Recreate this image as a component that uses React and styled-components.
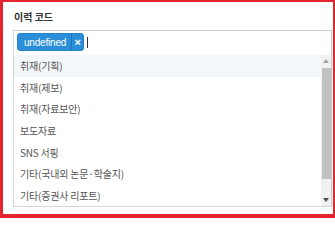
import React from 'react';
import styled, { createGlobalStyle } from 'styled-components';

const GlobalStyle = createGlobalStyle`
  html, body {
    margin: 0;
    padding: 0;
    background: #fff;
  }
  body {
    font-family: 'Liberation Sans', 'Noto Sans CJK KR', sans-serif;
  }
`;

const codes = [
  '취재(기획)',
  '취재(제보)',
  '취재(자료보안)',
  '보도자료',
  'SNS 서핑',
  '기타(국내외 논문·학술지)',
  '기타(증권사 리포트)'
];

export default function App() {
  return (
    <Frame>
      <GlobalStyle />
      <Label>이력 코드</Label>
      <SelectBox>
        <Selection>
          <Tag>
            <TagText>undefined</TagText>
            <TagRemove>×</TagRemove>
          </Tag>
          <Caret />
        </Selection>
        <Dropdown>
          <Options>
            {codes.map((code, i) => (
              <Option key={code} active={i === 0}>
                {code}
              </Option>
            ))}
          </Options>
          <ScrollBar>
            <ScrollArrow>
              <svg width="6" height="4" viewBox="0 0 6 4">
                <path d="M0 4 L3 0 L6 4 Z" fill="#a3a3a3" />
              </svg>
            </ScrollArrow>
            <ScrollTrack>
              <Thumb />
            </ScrollTrack>
            <ScrollArrow>
              <svg width="6" height="4" viewBox="0 0 6 4">
                <path d="M0 0 L3 4 L6 0 Z" fill="#505050" />
              </svg>
            </ScrollArrow>
          </ScrollBar>
        </Dropdown>
      </SelectBox>
    </Frame>
  );
}

const Frame = styled.div`
  box-sizing: border-box;
  width: 335px;
  height: 218px;
  border-style: solid;
  border-color: #e5262c;
  border-width: 2px 2px 4px 3px;
  padding: 8px 1px 0 10px;
  background: #fff;
`;

const Label = styled.div`
  font-family: 'Noto Sans CJK KR', sans-serif;
  font-weight: bold;
  font-size: 10px;
  line-height: 14px;
  color: #333;
  margin: 0 0 6px 1px;
`;

const SelectBox = styled.div`
  box-sizing: border-box;
  width: 319px;
  border: 1px solid #d2d6de;
  border-right-color: #c8c8c8;
  border-top-color: #cfcfcf;
`;

const Selection = styled.div`
  box-sizing: border-box;
  height: 24px;
  display: flex;
  align-items: center;
  padding: 0 0 2px 3px;
  gap: 3px;
`;

const Tag = styled.div`
  display: flex;
  align-items: stretch;
  height: 18px;
  border-radius: 3px;
  background: #2a8fd8;
  border: 1px solid #2683c6;
  box-sizing: border-box;
  color: #fff;
  overflow: hidden;
`;

const TagText = styled.span`
  display: flex;
  align-items: center;
  padding: 0 5px 0 6px;
  font-size: 10px;
  letter-spacing: -0.2px;
`;

const TagRemove = styled.span`
  display: flex;
  align-items: center;
  justify-content: center;
  width: 11px;
  border-left: 1px solid #2174b3;
  font-size: 11px;
  font-weight: bold;
`;

const Caret = styled.span`
  width: 1px;
  height: 11px;
  background: #333;
`;

const Dropdown = styled.div`
  display: flex;
  height: 151px;
`;

const Options = styled.ul`
  flex: 1;
  list-style: none;
  margin: 0;
  padding: 0;
`;

const Option = styled.li`
  box-sizing: border-box;
  height: 21.6px;
  display: flex;
  align-items: center;
  padding-left: 6px;
  font-family: 'Noto Sans CJK KR', sans-serif;
  font-size: 10px;
  color: #555;
  letter-spacing: -0.2px;
  background: ${props => (props.active ? '#f3f7fa' : '#fff')};
`;

const ScrollBar = styled.div`
  width: 10px;
  display: flex;
  flex-direction: column;
  background: #f1f1f1;
`;

const ScrollArrow = styled.div`
  height: 12px;
  display: flex;
  align-items: center;
  justify-content: center;
`;

const ScrollTrack = styled.div`
  flex: 1;
  padding: 1px 0 0 1px;
`;

const Thumb = styled.div`
  height: 111px;
  background: #c1c1c1;
`;
